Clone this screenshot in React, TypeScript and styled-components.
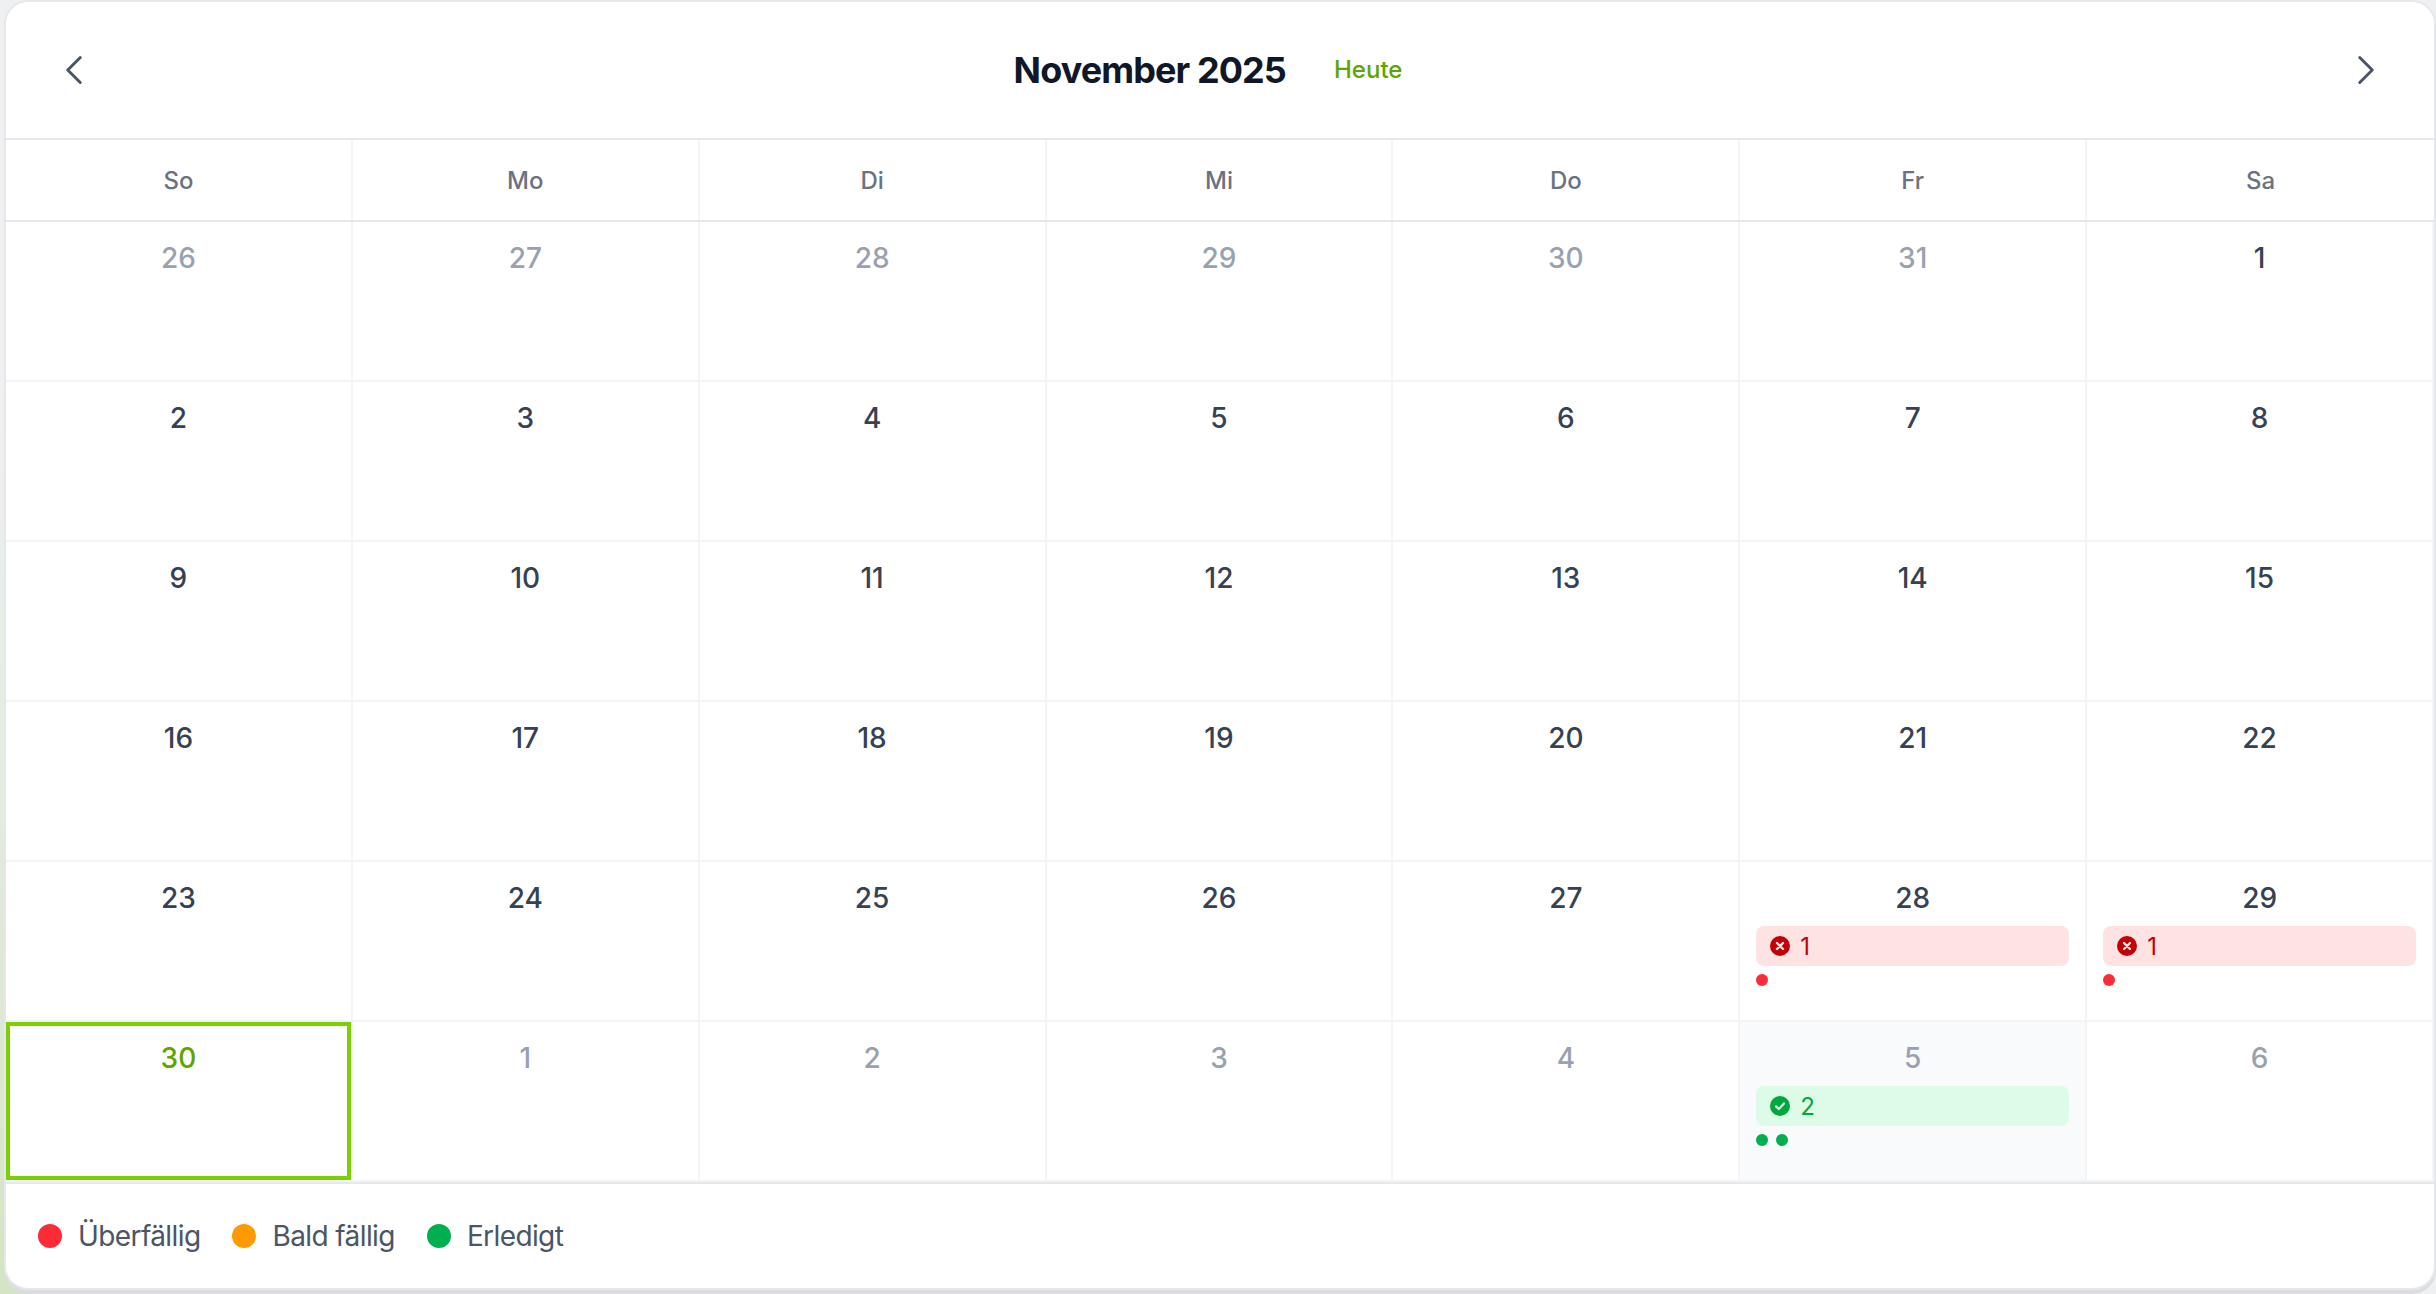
import styled, { createGlobalStyle } from 'styled-components';

type Status = 'overdue' | 'soon' | 'done';

interface DayData {
  label: number;
  muted?: boolean;
  today?: boolean;
  selected?: boolean;
  status?: Status;
  count?: number;
}

const statusColors: Record<Status, string> = {
  overdue: '#fb2c36',
  soon: '#fe9a00',
  done: '#00b04f',
};

const GlobalStyle = createGlobalStyle`
  html, body {
    margin: 0;
    padding: 0;
  }
  body {
    width: 2436px;
    height: 1294px;
    overflow: hidden;
    font-family: Inter, "Liberation Sans", sans-serif;
    background: radial-gradient(700px 900px at 0 100%, #d4e5c3, transparent), #eff0f2;
  }
`;

const Page = styled.div`
  box-sizing: border-box;
  width: 2436px;
  height: 1294px;
  padding: 0 0 4px 4px;
`;

const Card = styled.div`
  box-sizing: border-box;
  height: 1290px;
  background: #fff;
  border: 2px solid #e5e7eb;
  border-radius: 24px;
  overflow: hidden;
  box-shadow: 0 4px 0 #dcdde0;
`;

const Header = styled.div`
  display: flex;
  align-items: center;
  justify-content: space-between;
  box-sizing: border-box;
  height: 138px;
  padding: 24px;
  border-bottom: 2px solid #e5e7eb;
`;

const NavButton = styled.button`
  display: flex;
  padding: 24px;
  border: none;
  background: none;
  color: #4a5565;
  cursor: pointer;
`;

const TitleGroup = styled.div`
  display: flex;
  align-items: center;
  gap: 24px;
`;

const Title = styled.h2`
  margin: 0;
  font-size: 36px;
  line-height: 56px;
  font-weight: 700;
  letter-spacing: -0.9px;
  color: #101828;
`;

const TodayButton = styled.button`
  padding: 8px 24px;
  border: none;
  background: none;
  font-family: inherit;
  font-size: 24px;
  line-height: 32px;
  font-weight: 500;
  color: #5ea500;
  cursor: pointer;
`;

const Grid = styled.div`
  display: grid;
  grid-template-columns: repeat(7, 1fr);
`;

const WeekdayRow = styled(Grid)`
  border-bottom: 2px solid #e5e7eb;
`;

const Weekday = styled.div`
  box-sizing: border-box;
  height: 80px;
  display: flex;
  align-items: center;
  justify-content: center;
  font-size: 24px;
  font-weight: 500;
  color: #6a7282;
  border-right: 2px solid #f3f4f6;

  &:last-child {
    border-right: none;
  }
`;

const Cell = styled.div<{ $today?: boolean; $selected?: boolean }>`
  box-sizing: border-box;
  min-width: 0;
  height: 160px;
  padding: 16px;
  background: ${props => (props.$selected ? '#f9fafb' : '#fff')};
  border-right: 2px solid #f3f4f6;
  border-bottom: 2px solid #f3f4f6;
  box-shadow: ${props => (props.$today ? 'inset 0 0 0 4px #7ccf00' : 'none')};
`;

const DayNumber = styled.div<{ $muted?: boolean; $today?: boolean }>`
  font-size: 28px;
  line-height: 40px;
  font-weight: 500;
  text-align: center;
  color: ${props => (props.$today ? '#5ea500' : props.$muted ? '#99a1af' : '#364153')};
`;

const Pill = styled.div<{ $done?: boolean }>`
  display: flex;
  align-items: center;
  gap: 10px;
  box-sizing: border-box;
  height: 40px;
  margin-top: 8px;
  padding: 0 14px;
  border-radius: 8px;
  font-size: 24px;
  font-weight: 400;
  background: ${props => (props.$done ? '#dcfce7' : '#ffe2e2')};
  color: ${props => (props.$done ? '#00a63e' : '#c10007')};
`;

const DotRow = styled.div`
  display: flex;
  gap: 8px;
  margin-top: 8px;
`;

const Dot = styled.span<{ $status: Status }>`
  width: 12px;
  height: 12px;
  border-radius: 50%;
  background: ${props => statusColors[props.$status]};
`;

const Footer = styled.div`
  display: flex;
  align-items: center;
  gap: 32px;
  padding: 32px;
  border-top: 2px solid #e5e7eb;
`;

const LegendItem = styled.div`
  display: flex;
  align-items: center;
  gap: 16px;
  font-size: 28px;
  line-height: 40px;
  letter-spacing: -0.6px;
  color: #4a5565;
`;

const LegendDot = styled.span<{ $status: Status }>`
  width: 24px;
  height: 24px;
  border-radius: 50%;
  background: ${props => statusColors[props.$status]};
`;

const ChevronIcon = ({ path }: { path: string }) => (
  <svg width="40" height="40" viewBox="0 0 24 24" fill="none" stroke="currentColor" strokeWidth="1.8" strokeLinecap="round" strokeLinejoin="round" aria-hidden="true">
    <path d={path} />
  </svg>
);

const OverdueIcon = () => (
  <svg width="20" height="20" viewBox="0 0 20 20" aria-hidden="true">
    <circle cx="10" cy="10" r="10" fill="#c10007" />
    <path d="M7 7l6 6M13 7l-6 6" stroke="#ffe2e2" strokeWidth="2.4" strokeLinecap="round" />
  </svg>
);

const DoneIcon = () => (
  <svg width="20" height="20" viewBox="0 0 20 20" aria-hidden="true">
    <circle cx="10" cy="10" r="10" fill="#00a63e" />
    <path d="M6 10.4l2.8 2.6L14 7.4" fill="none" stroke="#dcfce7" strokeWidth="2.2" strokeLinecap="round" strokeLinejoin="round" />
  </svg>
);

const weekdays = ['So', 'Mo', 'Di', 'Mi', 'Do', 'Fr', 'Sa'];

const days: DayData[] = [
  ...[26, 27, 28, 29, 30, 31].map(label => ({ label, muted: true })),
  ...Array.from({ length: 27 }, (_, i) => ({ label: i + 1 })),
  { label: 28, status: 'overdue', count: 1 },
  { label: 29, status: 'overdue', count: 1 },
  { label: 30, today: true },
  ...[1, 2, 3, 4].map(label => ({ label, muted: true })),
  { label: 5, muted: true, selected: true, status: 'done', count: 2 },
  { label: 6, muted: true },
];

const legend: { status: Status; label: string }[] = [
  { status: 'overdue', label: 'Überfällig' },
  { status: 'soon', label: 'Bald fällig' },
  { status: 'done', label: 'Erledigt' },
];

const App = () => {
  return (
    <Page>
      <GlobalStyle />
      <Card>
        <Header>
          <NavButton aria-label="Vorheriger Monat">
            <ChevronIcon path="M15.75 19.5 8.25 12l7.5-7.5" />
          </NavButton>
          <TitleGroup>
            <Title>November 2025</Title>
            <TodayButton>Heute</TodayButton>
          </TitleGroup>
          <NavButton aria-label="Nächster Monat">
            <ChevronIcon path="m8.25 4.5 7.5 7.5-7.5 7.5" />
          </NavButton>
        </Header>
        <WeekdayRow>
          {weekdays.map(day => (
            <Weekday key={day}>{day}</Weekday>
          ))}
        </WeekdayRow>
        <Grid>
          {days.map((day, index) => (
            <Cell key={index} $today={day.today} $selected={day.selected}>
              <DayNumber $muted={day.muted} $today={day.today}>
                {day.label}
              </DayNumber>
              {day.status && day.count && (
                <>
                  <Pill $done={day.status === 'done'}>
                    {day.status === 'done' ? <DoneIcon /> : <OverdueIcon />}
                    {day.count}
                  </Pill>
                  <DotRow>
                    {Array.from({ length: day.count }, (_, i) => (
                      <Dot key={i} $status={day.status as Status} />
                    ))}
                  </DotRow>
                </>
              )}
            </Cell>
          ))}
        </Grid>
        <Footer>
          {legend.map(item => (
            <LegendItem key={item.status}>
              <LegendDot $status={item.status} />
              {item.label}
            </LegendItem>
          ))}
        </Footer>
      </Card>
    </Page>
  );
};

export default App;
